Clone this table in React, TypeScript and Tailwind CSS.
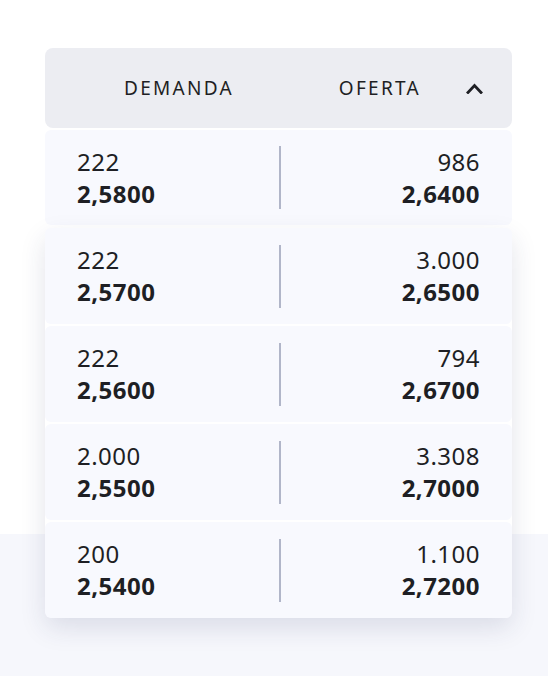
const rows = [
  { bidQty: "222", bid: "2,5800", askQty: "986", ask: "2,6400" },
  { bidQty: "222", bid: "2,5700", askQty: "3.000", ask: "2,6500" },
  { bidQty: "222", bid: "2,5600", askQty: "794", ask: "2,6700" },
  { bidQty: "2.000", bid: "2,5500", askQty: "3.308", ask: "2,7000" },
  { bidQty: "200", bid: "2,5400", askQty: "1.100", ask: "2,7200" },
];

type Row = (typeof rows)[number];

const BookRow = ({ row, height }: { row: Row; height: string }) => (
  <div className={`flex items-center rounded-md bg-[#f8f9fe] px-8 ${height}`}>
    <div className="flex-1 text-2xl leading-8 tracking-[0.02em] text-[#1e1f24]">
      <div>{row.bidQty}</div>
      <div className="font-bold">{row.bid}</div>
    </div>
    <div className="ml-[2px] h-[63px] w-[2px] bg-[#b1b6c9]" />
    <div className="flex-1 text-right text-2xl leading-8 tracking-[0.02em] text-[#1e1f24]">
      <div>{row.askQty}</div>
      <div className="font-bold">{row.ask}</div>
    </div>
  </div>
);

const App = () => {
  const open = true;

  return (
    <div
      className="flex h-[676px] w-full flex-col bg-white"
      style={{ fontFamily: '"Noto Sans", "Open Sans", sans-serif' }}
    >
      <div className="h-[534px] bg-white pl-[45px] pt-12">
        <div className="relative w-[467px]">
          {/* header */}
          <div className="flex h-20 items-center rounded-lg bg-[#ecedf2] pl-[79px] pr-[29px] text-[19px] tracking-[0.12em] text-[#1e1f24]">
            <span>DEMANDA</span>
            <span className="ml-auto">OFERTA</span>
            <button type="button" className="ml-[45px] flex h-4 w-[17px] items-center">
              <svg width="17" height="11" viewBox="0 0 17 11" fill="none">
                <polyline
                  points="2,9.5 8.5,2.5 15,9.5"
                  stroke="#1e1f24"
                  strokeWidth="2.8"
                  strokeLinecap="square"
                />
              </svg>
            </button>
          </div>

          <div className="mt-[2px]">
            <BookRow row={rows[0]} height="h-[95px]" />
          </div>

          {/* dropdown */}
          {open && (
            <div className="absolute left-0 right-0 top-full mt-[3px] flex flex-col gap-[2px] rounded-lg bg-white shadow-[0_10px_26px_rgba(40,50,90,0.13)]">
              {rows.slice(1).map((r) => (
                <BookRow key={r.bid} row={r} height="h-[96px]" />
              ))}
            </div>
          )}
        </div>
      </div>
      <div className="flex-1 bg-[#f6f7fc]" />
    </div>
  );
};

export default App;
